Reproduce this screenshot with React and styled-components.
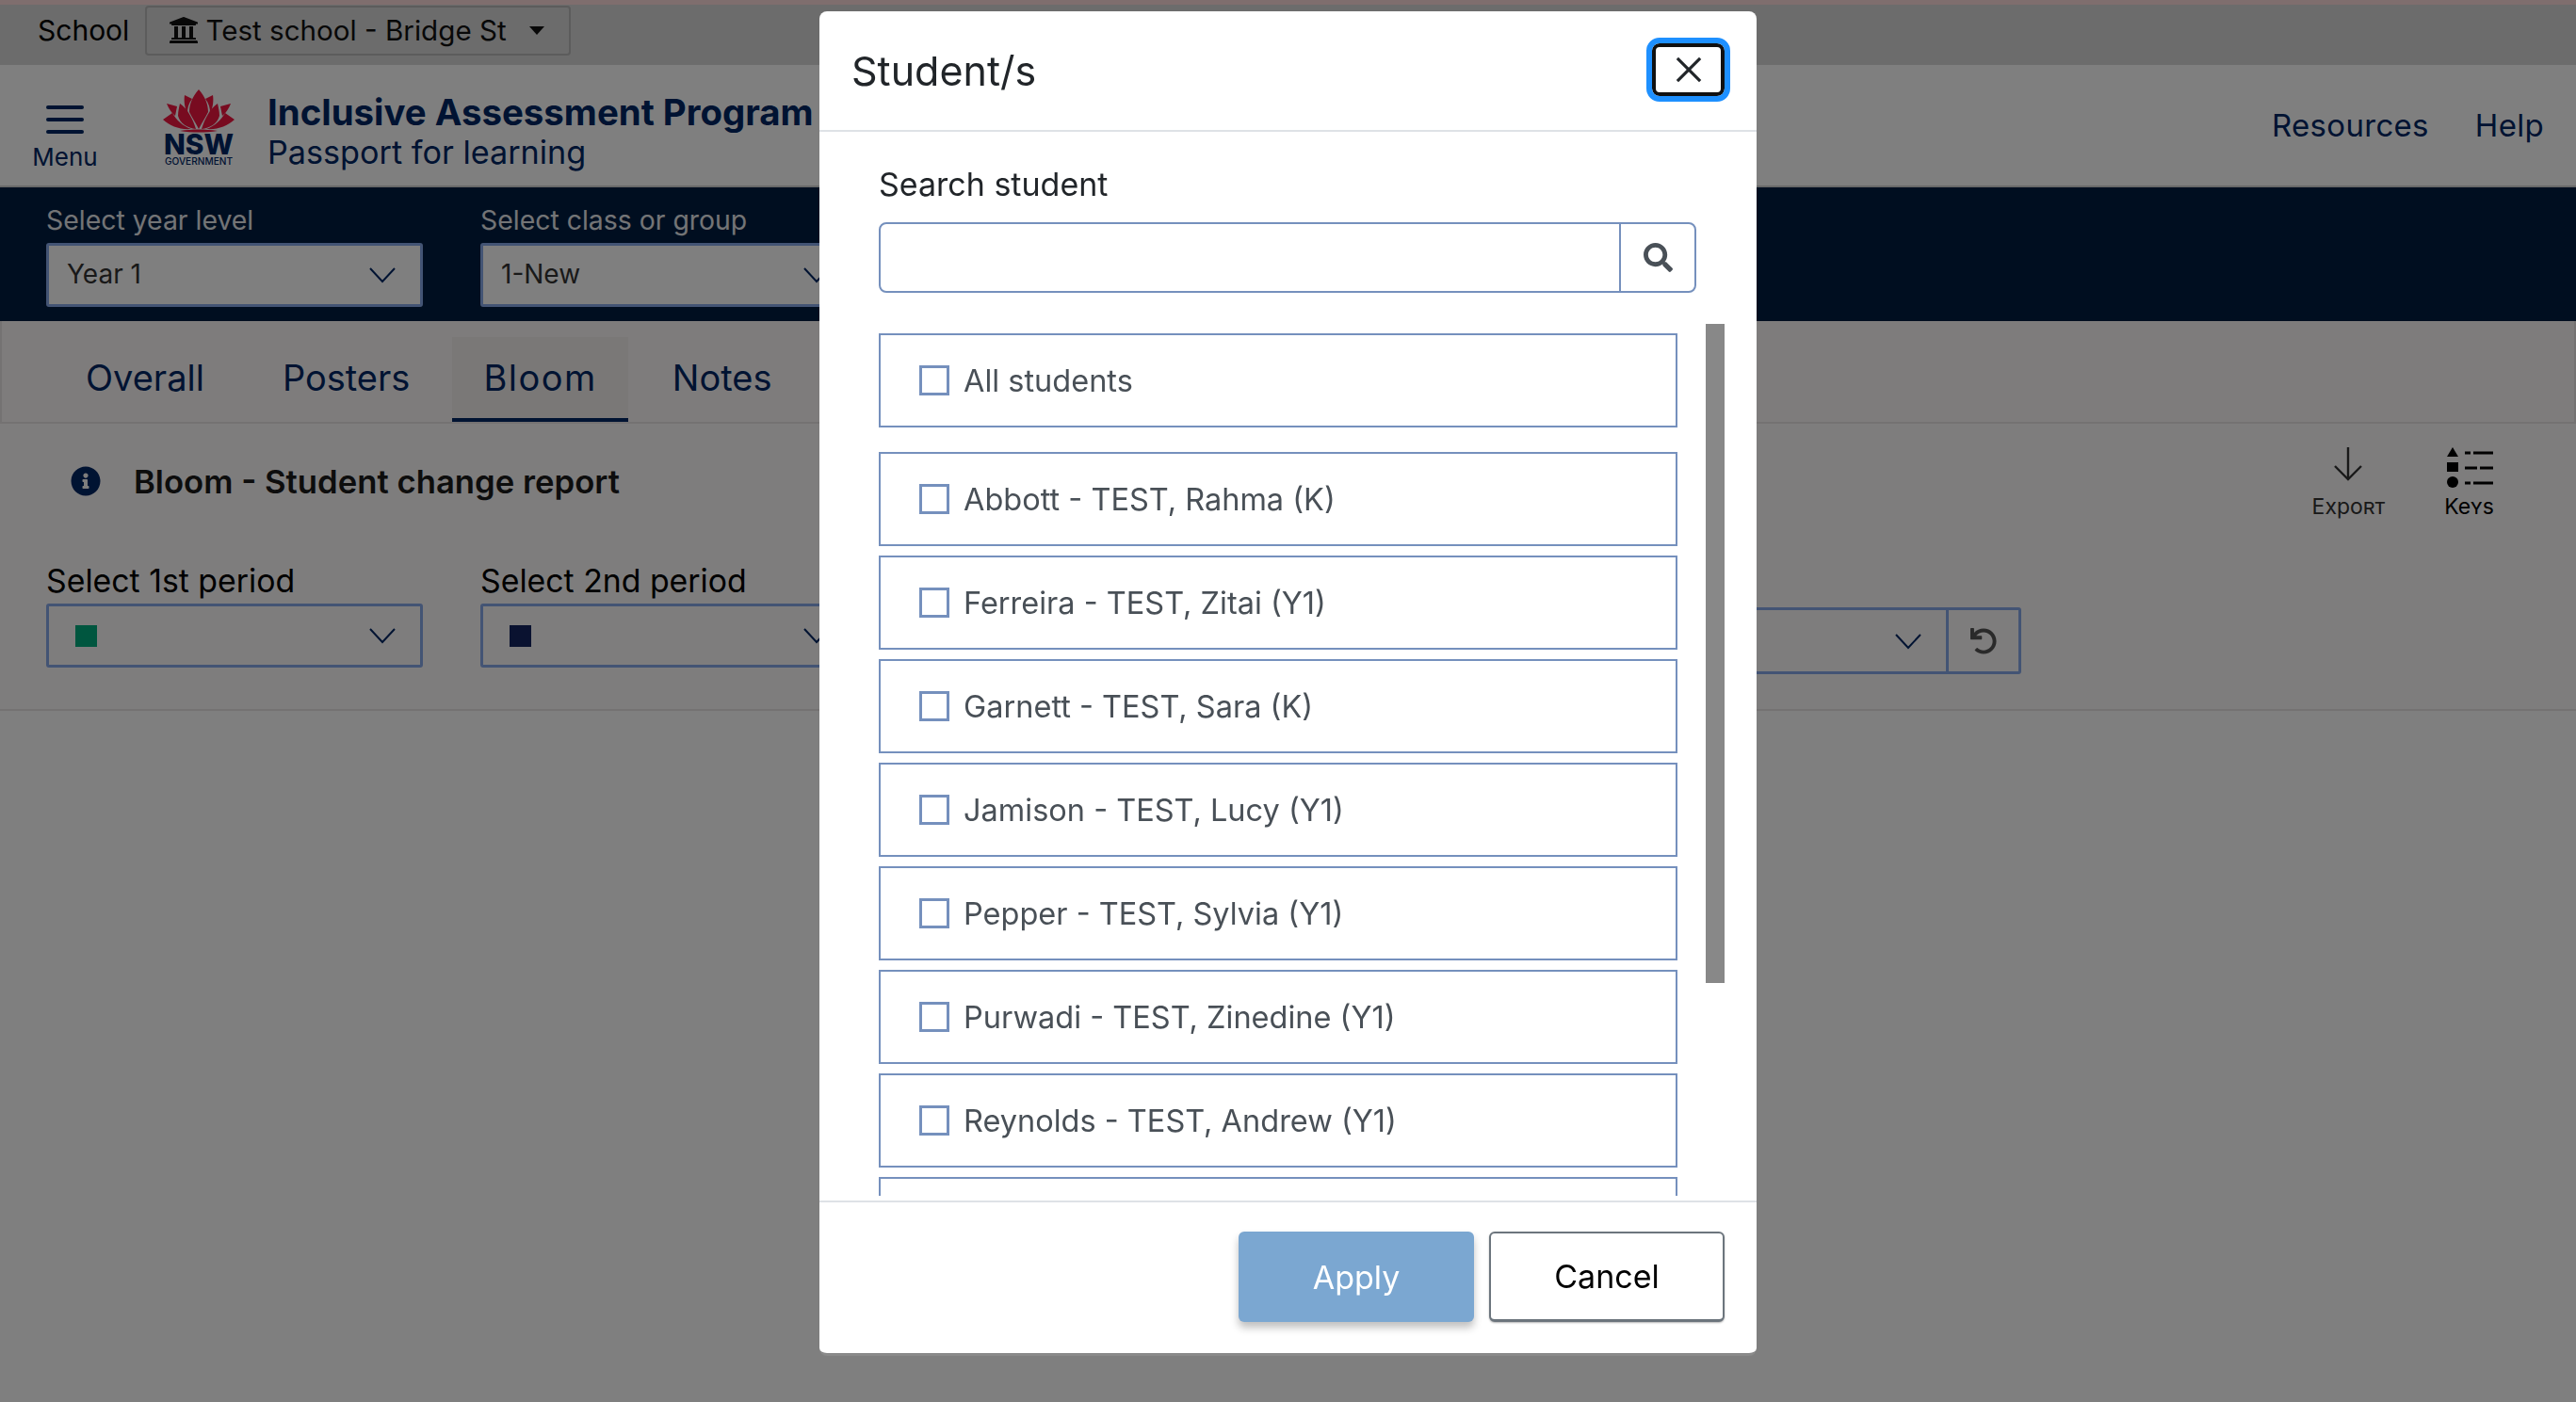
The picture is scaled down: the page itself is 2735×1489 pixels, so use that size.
import React from 'react';
import styled, { createGlobalStyle } from 'styled-components';
import { FaUniversity, FaSearch, FaUndo, FaInfoCircle } from 'react-icons/fa';

const GlobalStyle = createGlobalStyle`
  html, body {
    margin: 0;
    background: #ffffff;
    font-family: Inter, "Open Sans", sans-serif;
  }
  * { box-sizing: border-box; }
`;

const students = [
  'Abbott - TEST, Rahma (K)',
  'Ferreira - TEST, Zitai (Y1)',
  'Garnett - TEST, Sara (K)',
  'Jamison - TEST, Lucy (Y1)',
  'Pepper - TEST, Sylvia (Y1)',
  'Purwadi - TEST, Zinedine (Y1)',
  'Reynolds - TEST, Andrew (Y1)',
];

const Chevron = () => (
  <svg width="30" height="18" viewBox="0 0 30 18" fill="none" stroke="#002664" strokeWidth="2">
    <polyline points="2,2 15,16 28,2" />
  </svg>
);

const Logo = () => (
  <svg width="80" height="82" viewBox="0 0 80 82">
    <g fill="#f01640">
      <path d="M40 0 C47 8 50 16 50 24 C47 30 43 36 40 42 C37 36 33 30 30 24 C30 16 33 8 40 0Z" />
      <path d="M25 6 L33 10 C29 15 28 20 28 25 C25 20 24 12 25 6Z" />
      <path d="M55 6 L47 10 C51 15 52 20 52 25 C55 20 56 12 55 6Z" />
      <path d="M20 15 C28 20 34 32 37 42 C28 41 20 36 18 28 C18 24 19 19 20 15Z" />
      <path d="M60 15 C52 20 46 32 43 42 C52 41 60 36 62 28 C62 24 61 19 60 15Z" />
      <path d="M6 15 L17 18 L15 28 C11 25 8 20 6 15Z" />
      <path d="M74 15 L63 18 L65 28 C69 25 72 20 74 15Z" />
      <path d="M2 32 L12 25 C16 32 23 39 32 42 C20 43 10 39 2 32Z" />
      <path d="M78 32 L68 25 C64 32 57 39 48 42 C60 43 70 39 78 32Z" />
      <path d="M20 44 C33 42 47 42 60 44 C47 46 33 46 20 44Z" />
    </g>
    <text x="40" y="69" textAnchor="middle" fontFamily="Inter, sans-serif" fontWeight="800" fontSize="30" textLength="74" lengthAdjust="spacingAndGlyphs" fill="#002664">NSW</text>
    <text x="40" y="80" textAnchor="middle" fontFamily="Inter, sans-serif" fontWeight="500" fontSize="10" textLength="72" lengthAdjust="spacingAndGlyphs" fill="#002664">GOVERNMENT</text>
  </svg>
);

const KeysIcon = () => (
  <svg width="50" height="44" viewBox="0 0 50 44" fill="#000000">
    <polygon points="7,0 13,10 1,10" />
    <rect x="1" y="16" width="12" height="10" />
    <circle cx="7" cy="37" r="6" />
    <g stroke="#000000" strokeWidth="3">
      <line x1="20" y1="6" x2="26" y2="6" />
      <line x1="29" y1="6" x2="50" y2="6" />
      <line x1="20" y1="22" x2="33" y2="22" />
      <line x1="36" y1="22" x2="50" y2="22" />
      <line x1="20" y1="38" x2="26" y2="38" />
      <line x1="29" y1="38" x2="50" y2="38" />
    </g>
  </svg>
);

const ExportIcon = () => (
  <svg width="32" height="36" viewBox="0 0 32 36" fill="none" stroke="#333333" strokeWidth="2.4">
    <line x1="16" y1="0" x2="16" y2="34" />
    <polyline points="2,20 16,34 30,20" />
  </svg>
);

export default function App() {
  return (
    <Page>
      <GlobalStyle />
      <TopBar>
        <SchoolLabel>School</SchoolLabel>
        <SchoolButton>
          <FaUniversity size={32} />
          <span>Test school - Bridge St</span>
          <Caret />
        </SchoolButton>
      </TopBar>
      <Header>
        <MenuButton>
          <MenuBars>
            <i />
            <i />
            <i />
          </MenuBars>
          <MenuText>Menu</MenuText>
        </MenuButton>
        <LogoWrap>
          <Logo />
        </LogoWrap>
        <Titles>
          <AppTitle>Inclusive Assessment Program</AppTitle>
          <AppSubtitle>Passport for learning</AppSubtitle>
        </Titles>
        <HeaderLinks>
          <HeaderLink>Resources</HeaderLink>
          <HeaderLink>Help</HeaderLink>
        </HeaderLinks>
      </Header>
      <NavyBar>
        <Field>
          <NavyLabel>Select year level</NavyLabel>
          <Select $filled>
            <SelectText>Year 1</SelectText>
            <Chevron />
          </Select>
        </Field>
        <Field>
          <NavyLabel>Select class or group</NavyLabel>
          <Select $filled>
            <SelectText>1-New</SelectText>
            <Chevron />
          </Select>
        </Field>
      </NavyBar>
      <Tabs>
        <Tab>Overall</Tab>
        <Tab>Posters</Tab>
        <Tab $active>Bloom</Tab>
        <Tab>Notes</Tab>
      </Tabs>
      <Report>
        <TitleRow>
          <ReportTitle>
            <FaInfoCircle size={32} color="#002664" />
            <span>Bloom - Student change report</span>
          </ReportTitle>
          <Actions>
            <Action>
              <ActionIcon>
                <ExportIcon />
              </ActionIcon>
              <ActionText>Export</ActionText>
            </Action>
            <Action $dark>
              <ActionIcon>
                <KeysIcon />
              </ActionIcon>
              <ActionText>Keys</ActionText>
            </Action>
          </Actions>
        </TitleRow>
        <FilterRow>
          <Field>
            <PeriodLabel>Select 1st period</PeriodLabel>
            <Select>
              <Swatch $color="#00ac7e" />
              <Chevron />
            </Select>
          </Field>
          <Field>
            <PeriodLabel>Select 2nd period</PeriodLabel>
            <Select>
              <Swatch $color="#142460" />
              <Chevron />
            </Select>
          </Field>
          <StudentFilter>
            <Chevron />
            <ResetButton>
              <FaUndo size={28} />
            </ResetButton>
          </StudentFilter>
        </FilterRow>
      </Report>

      <Backdrop />
      <Modal>
        <ModalHeader>
          <ModalTitle>Student/s</ModalTitle>
          <CloseButton>
            <svg width="28" height="28" viewBox="0 0 30 30" stroke="#212529" strokeWidth="3.4">
              <line x1="2" y1="2" x2="28" y2="28" />
              <line x1="28" y1="2" x2="2" y2="28" />
            </svg>
          </CloseButton>
        </ModalHeader>
        <ModalBody>
          <SearchLabel>Search student</SearchLabel>
          <SearchBox>
            <SearchInput />
            <SearchAddon>
              <FaSearch size={31} />
            </SearchAddon>
          </SearchBox>
          <ListArea>
            <StudentList>
              <AllRow>
                <Checkbox />
                <RowText>All students</RowText>
              </AllRow>
              {students.map((name) => (
                <StudentRow key={name}>
                  <Checkbox />
                  <RowText>{name}</RowText>
                </StudentRow>
              ))}
              <StudentRow />
            </StudentList>
            <ScrollThumb />
          </ListArea>
        </ModalBody>
        <ModalFooter>
          <ApplyButton>Apply</ApplyButton>
          <CancelButton>Cancel</CancelButton>
        </ModalFooter>
      </Modal>
    </Page>
  );
}

const Page = styled.div`
  width: 100%;
  min-height: 1489px;
  background: #ffffff;
  color: #212529;
`;

const TopBar = styled.div`
  height: 69px;
  border-top: 5px solid #ffdddd;
  background: #d8d8d8;
  display: flex;
  align-items: center;
  padding: 0 0 10px 40px;
  gap: 17px;
`;

const SchoolLabel = styled.span`
  font-size: 30px;
  color: #000000;
`;

const SchoolButton = styled.div`
  width: 452px;
  height: 53px;
  border: 2px solid #b8b8b8;
  border-radius: 4px;
  display: flex;
  align-items: center;
  gap: 7px;
  padding: 0 0 0 23px;
  font-size: 29.6px;
  color: #111111;
  span {
    width: 337px;
    white-space: nowrap;
  }
`;

const Caret = styled.i`
  width: 0;
  height: 0;
  border-left: 8px solid transparent;
  border-right: 8px solid transparent;
  border-top: 9px solid #111111;
`;

const Header = styled.div`
  height: 130px;
  border-bottom: 2px solid #d0d0d0;
  display: flex;
  align-items: center;
  padding: 0 34px 0 34px;
`;

const MenuButton = styled.div`
  width: 70px;
  align-self: flex-start;
  margin-top: 43px;
  display: flex;
  flex-direction: column;
  align-items: center;
  gap: 11px;
`;

const MenuBars = styled.div`
  width: 40px;
  display: flex;
  flex-direction: column;
  gap: 9px;
  i {
    height: 4px;
    border-radius: 2px;
    background: #002664;
  }
`;

const MenuText = styled.span`
  font-size: 26px;
  line-height: 28px;
  color: #002664;
`;

const LogoWrap = styled.div`
  margin: 6px 0 0 67px;
  height: 82px;
`;

const Titles = styled.div`
  margin: 13px 0 0 33px;
  display: flex;
  flex-direction: column;
  gap: 1px;
`;

const AppTitle = styled.div`
  font-size: 38.4px;
  line-height: 44px;
  font-weight: 700;
  color: #002664;
  white-space: nowrap;
`;

const AppSubtitle = styled.div`
  font-size: 34.2px;
  line-height: 40px;
  color: #002664;
`;

const HeaderLinks = styled.div`
  margin-left: auto;
  display: flex;
  gap: 49px;
`;

const HeaderLink = styled.span`
  font-size: 33px;
  letter-spacing: 0.3px;
  color: #002664;
`;

const NavyBar = styled.div`
  height: 142px;
  background: #001c40;
  display: flex;
  gap: 61px;
  padding: 17px 49px 0;
`;

const Field = styled.div`
  width: 400px;
  flex-shrink: 0;
  display: flex;
  flex-direction: column;
  gap: 6px;
`;

const NavyLabel = styled.label`
  font-size: 28.4px;
  line-height: 36px;
  color: #ffffff;
  opacity: 0.9;
  white-space: nowrap;
`;

const PeriodLabel = styled.label`
  font-size: 33.8px;
  line-height: 36px;
  color: #000000;
  white-space: nowrap;
`;

const Select = styled.div`
  height: 68px;
  border: 3px solid #86a8e8;
  border-radius: 3px;
  background: ${(p) => (p.$filled ? '#ffffff' : 'transparent')};
  display: flex;
  align-items: center;
  justify-content: space-between;
  padding: 0 25px 0 19px;
`;

const SelectText = styled.span`
  font-size: 28px;
  margin-top: -3px;
  color: #333333;
`;

const Swatch = styled.i`
  width: 23px;
  height: 23px;
  margin-left: 9px;
  background: ${(p) => p.$color};
`;

const Tabs = styled.div`
  height: 109px;
  border: solid #e8e4e4;
  border-width: 0 2px 2px;
  background: #fdf9f9;
  display: flex;
  align-items: flex-end;
  gap: 83px;
  padding: 0 0 0 89px;
`;

const Tab = styled.div`
  height: 90px;
  padding: 0 33px;
  margin: ${(p) => (p.$active ? '0 -36px 0 -38px' : '0 -33px')};
  display: flex;
  align-items: center;
  font-size: 38px;
  letter-spacing: ${(p) => (p.$active ? '1.5px' : '0')};
  color: #002664;
  background: ${(p) => (p.$active ? '#f5f0ee' : 'transparent')};
  border-bottom: 4px solid ${(p) => (p.$active ? '#002664' : 'transparent')};
`;

const Report = styled.div`
  height: 305px;
  border-bottom: 2px solid #e8e4e4;
  background: #fdfafa;
  padding: 0 49px;
`;

const TitleRow = styled.div`
  height: 149px;
  display: flex;
  justify-content: space-between;
  align-items: flex-start;
`;

const ReportTitle = styled.div`
  margin: 40px 0 0 26px;
  display: flex;
  align-items: center;
  gap: 35px;
  font-size: 34.7px;
  font-weight: 600;
  color: #1a1a1a;
`;

const Actions = styled.div`
  margin: 25px 38px 0 0;
  display: flex;
  gap: 63px;
`;

const Action = styled.div`
  display: flex;
  flex-direction: column;
  align-items: center;
  gap: 5px;
  color: ${(p) => (p.$dark ? '#000000' : '#333333')};
`;

const ActionIcon = styled.div`
  height: 44px;
  display: flex;
  align-items: flex-start;
`;

const ActionText = styled.span`
  font-size: 23px;
  line-height: 28px;
  font-variant: small-caps;
`;

const FilterRow = styled.div`
  display: flex;
  gap: 61px;
`;

const StudentFilter = styled.div`
  width: 700px;
  height: 71px;
  margin: 46px 540px 0 auto;
  border: 3px solid #86a8e8;
  border-radius: 3px;
  display: flex;
  align-items: center;
  justify-content: flex-end;
  gap: 25px;
`;

const ResetButton = styled.div`
  width: 77px;
  height: 100%;
  border-left: 3px solid #86a8e8;
  color: #555555;
  display: flex;
  align-items: center;
  justify-content: center;
`;

const Backdrop = styled.div`
  position: fixed;
  inset: 0;
  background: rgba(0, 0, 0, 0.5);
`;

const Modal = styled.div`
  position: fixed;
  left: 870px;
  top: 12px;
  width: 995px;
  height: 1428px;
  background: #ffffff;
  border-bottom: 3px solid #8a8a8a;
  border-radius: 8px;
  display: flex;
  flex-direction: column;
  overflow: hidden;
`;

const ModalHeader = styled.div`
  height: 128px;
  flex-shrink: 0;
  border-bottom: 2px solid #dee2e6;
  display: flex;
  align-items: center;
  justify-content: space-between;
  padding: 0 34px;
`;

const ModalTitle = styled.h2`
  margin: 0;
  font-size: 43px;
  font-weight: 400;
  color: #212529;
`;

const CloseButton = styled.div`
  width: 77px;
  height: 56px;
  margin-bottom: 2px;
  border: 4px solid #111111;
  border-radius: 8px;
  outline: 6px solid #1e90ff;
  display: flex;
  align-items: center;
  justify-content: center;
`;

const ModalBody = styled.div`
  flex: 1;
  min-height: 0;
  padding: 36px 0 0 63px;
`;

const SearchLabel = styled.label`
  display: block;
  font-size: 34px;
  line-height: 40px;
  color: #212529;
`;

const SearchBox = styled.div`
  width: 868px;
  height: 75px;
  margin-top: 20px;
  border: 2px solid #7590bd;
  border-radius: 8px;
  display: flex;
`;

const SearchInput = styled.div`
  flex: 1;
`;

const SearchAddon = styled.div`
  width: 80px;
  border-left: 2px solid #7590bd;
  color: #495057;
  display: flex;
  align-items: center;
  justify-content: center;
`;

const ListArea = styled.div`
  height: 926px;
  margin-top: 33px;
  display: flex;
  align-items: flex-start;
  overflow: hidden;
`;

const StudentList = styled.div`
  width: 848px;
  padding-top: 10px;
  display: flex;
  flex-direction: column;
  gap: 10px;
`;

const StudentRow = styled.div`
  height: 100px;
  flex-shrink: 0;
  border: 2px solid #7590bd;
  display: flex;
  align-items: center;
  gap: 15px;
  padding-left: 41px;
`;

const AllRow = styled(StudentRow)`
  margin-bottom: 16px;
`;

const Checkbox = styled.i`
  width: 32px;
  height: 32px;
  border: 3px solid #7590bd;
`;

const RowText = styled.span`
  font-size: 32.5px;
  color: #495057;
`;

const ScrollThumb = styled.div`
  width: 20px;
  height: 700px;
  margin-left: 30px;
  flex-shrink: 0;
  background: #888888;
`;

const ModalFooter = styled.div`
  height: 162px;
  flex-shrink: 0;
  border-top: 2px solid #dee2e6;
  display: flex;
  justify-content: flex-end;
  align-items: flex-start;
  gap: 16px;
  padding: 31px 34px 0 0;
`;

const ApplyButton = styled.div`
  width: 250px;
  height: 96px;
  border-radius: 6px;
  background: #7ba7d1;
  box-shadow: 0 6px 8px rgba(0, 0, 0, 0.25);
  color: #ffffff;
  font-size: 34px;
  display: flex;
  align-items: center;
  justify-content: center;
`;

const CancelButton = styled.div`
  width: 250px;
  height: 96px;
  border: 2px solid #6c757d;
  border-bottom-width: 3px;
  border-radius: 6px;
  background: #ffffff;
  box-shadow: 0 1px 2px rgba(0, 0, 0, 0.3);
  color: #000000;
  font-size: 34px;
  display: flex;
  align-items: center;
  justify-content: center;
`;
